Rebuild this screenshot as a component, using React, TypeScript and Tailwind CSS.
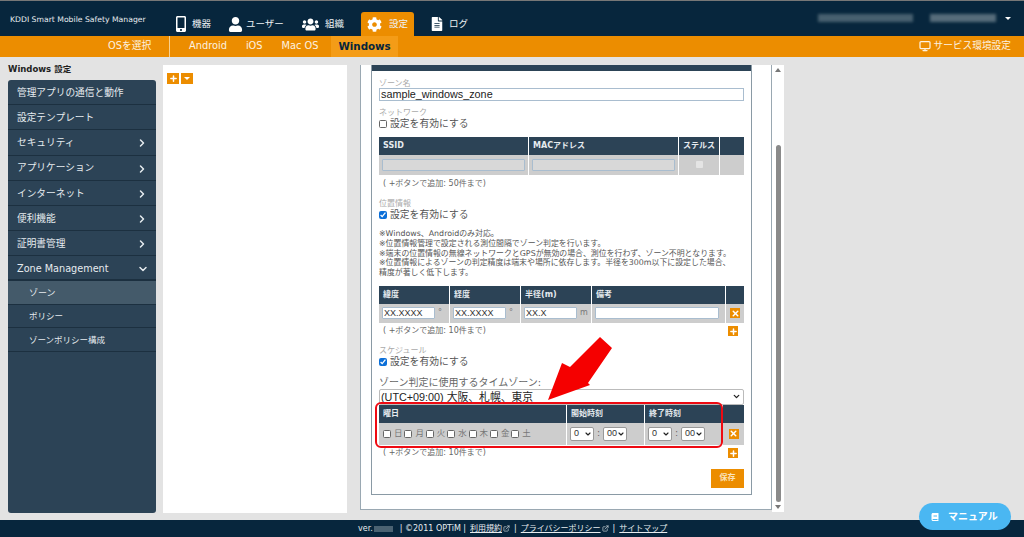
import { ChevronDown, ChevronRight, ExternalLink, Monitor, Plus, X } from "lucide-react";
import { FaBook, FaCog, FaFileAlt, FaMobileAlt, FaUser, FaUsers } from "react-icons/fa";

const sans = "font-['DejaVu_Sans','Noto_Sans_CJK_JP',sans-serif]";
const arial = "font-['Liberation_Sans','Noto_Sans_CJK_JP',sans-serif]";

const menu = [
    { label: "管理アプリの通信と動作" },
    { label: "設定テンプレート" },
    { label: "セキュリティ", more: true },
    { label: "アプリケーション", more: true },
    { label: "インターネット", more: true },
    { label: "便利機能", more: true },
    { label: "証明書管理", more: true },
];

function HeaderTab({ icon, label, active, className }: { icon: React.ReactNode; label: string; active?: boolean; className: string }) {
    return (
        <div className={`flex h-[24px] items-center rounded-t-[3px] ${active ? "bg-[#ec8d00]" : ""} ${className}`}>
            {icon}
            <span className="text-[9.5px] text-[#eef2f5]">{label}</span>
        </div>
    );
}

function OrangeIcon({ kind }: { kind: "plus" | "x" }) {
    return (
        <div className="flex h-[10px] w-[10px] items-center justify-center bg-[#ec8d00]">
            {kind === "plus" ? <Plus size={9} strokeWidth={4} color="white" /> : <X size={9} strokeWidth={4} color="white" />}
        </div>
    );
}

function Check({ checked }: { checked?: boolean }) {
    return (
        <input
            type="checkbox"
            defaultChecked={checked}
            className={`m-0 h-[8px] w-[8px] shrink-0 accent-[#0b6fd8] ${checked ? "" : "appearance-none rounded-[1.5px] border border-[#666] bg-white"}`}
        />
    );
}

function Enable({ checked }: { checked?: boolean }) {
    return (
        <div className="flex h-[12px] items-center gap-[3px] text-[9.8px] leading-[12px] text-[#555]">
            <Check checked={checked} />
            <span>設定を有効にする</span>
        </div>
    );
}

function Label({ children }: { children: React.ReactNode }) {
    return <div className="h-[10px] text-[8px] leading-[10px] text-[#aaa]">{children}</div>;
}

function Note({ children, plus }: { children: React.ReactNode; plus?: boolean }) {
    return (
        <div className="mt-[3px] flex h-[11px] items-center justify-between pl-[4px] pr-[6px] text-[8px] text-[#666]">
            <span>{children}</span>
            {plus && <OrangeIcon kind="plus" />}
        </div>
    );
}

function Head({ children }: { children?: React.ReactNode }) {
    return <div className="flex items-center bg-[#2c4356] pl-[4px] text-[8px] font-bold text-[#e6ebef]">{children}</div>;
}

function Cell({ children, className = "" }: { children?: React.ReactNode; className?: string }) {
    return <div className={`flex items-center bg-[#cdcdcd] ${className}`}>{children}</div>;
}

function TimeSelect({ value }: { value: string }) {
    return (
        <div className={`flex h-[14px] w-[24px] items-center justify-between rounded-[2px] border border-[#999] bg-white pl-[3px] pr-[1px] text-[9px] text-[#333] ${arial}`}>
            <span>{value}</span>
            <ChevronDown size={8} strokeWidth={3.5} color="#222" />
        </div>
    );
}

function TimeCell() {
    return (
        <Cell className="pl-[3px] text-[8px] text-[#555]">
            <TimeSelect value="0" />
            <span className="w-[9px] text-center">:</span>
            <TimeSelect value="00" />
        </Cell>
    );
}

function CoordInput({ value, width }: { value: string; width: string }) {
    return (
        <input
            readOnly
            value={value}
            className={`h-[12px] rounded-[1px] border border-[#a9bdcf] bg-white px-[1px] text-[9px] text-[#333] ${width} ${arial}`}
        />
    );
}

export default function App() {
    return (
        <div className={`relative flex h-[537px] w-[1024px] flex-col overflow-hidden bg-[#e3e3e3] ${sans}`}>
            {/* header */}
            <header className="flex h-[36px] shrink-0 items-end border-t border-[#777] bg-[#07263d]">
                <div className="w-[176px] self-stretch pl-[10px] pt-[14px] text-[7.7px] leading-[10px] text-[#e8edf0]">
                    KDDI Smart Mobile Safety Manager
                </div>
                <HeaderTab className="w-[52px]" icon={<FaMobileAlt size={16} color="white" className="-ml-[3px] mr-[3px]" />} label="機器" />
                <HeaderTab className="w-[74px]" icon={<FaUser size={15} color="white" className="mr-[3px]" />} label="ユーザー" />
                <HeaderTab className="w-[59px]" icon={<FaUsers size={17} color="white" className="mr-[6px]" />} label="組織" />
                <HeaderTab active className="w-[53px] pl-[6px]" icon={<FaCog size={15} color="white" className="mr-[7px]" />} label="設定" />
                <HeaderTab className="ml-[16px] w-[60px]" icon={<FaFileAlt size={14} color="white" className="mr-[5px]" />} label="ログ" />
                <div className="ml-auto flex h-full items-center pb-[1px] pr-[13px]">
                    <div className="h-[8px] w-[95px] bg-[#47606f] blur-[1.5px]" />
                    <div className="ml-[17px] h-[8px] w-[66px] bg-[#566c7a] blur-[1.5px]" />
                    <div className="ml-[9px] h-0 w-0 border-x-[3px] border-t-[3px] border-x-transparent border-t-white" />
                </div>
            </header>

            {/* os tabs */}
            <nav className="flex h-[21px] shrink-0 items-center bg-[#ec8d00] text-[9.8px] text-[#fdf2e0]">
                <span className="ml-[108px] w-[61px]">OSを選択</span>
                <div className="h-full w-px bg-[#f9d08f]" />
                <span className="ml-[19px]">Android</span>
                <span className="ml-[19px]">iOS</span>
                <span className="ml-[19px]">Mac OS</span>
                <span className="ml-[13px] flex h-full items-center bg-[#f49c17] px-[7px] text-[10.3px] font-bold text-[#07263d]">Windows</span>
                <div className="ml-auto flex items-center gap-[3px] pr-[13px] text-[9.7px]">
                    <Monitor size={12} strokeWidth={2.5} />
                    <span>サービス環境設定</span>
                </div>
            </nav>

            {/* body */}
            <main className="flex min-h-0 flex-1">
                <aside className="ml-[8px] flex w-[148px] flex-col">
                    <div className="h-[23px] pt-[7px] text-[8.5px] font-bold leading-[10px] text-[#222]">Windows 設定</div>
                    <div className="flex h-[433px] flex-col rounded-[3px] bg-[#2c4356] text-[9.7px] text-[#e6ebef]">
                        {menu.map((m) => (
                            <div key={m.label} className="flex h-[25.2px] items-center justify-between border-b border-[#1c3040] pl-[9px] pr-[8px] pt-[2px]">
                                <span>{m.label}</span>
                                {m.more && <ChevronRight size={12} strokeWidth={3} />}
                            </div>
                        ))}
                        <div className="flex h-[25px] items-center justify-between border-b-2 border-[#1c3040] pl-[9px] pr-[7px] pt-[2px]">
                            <span>Zone Management</span>
                            <ChevronDown size={12} strokeWidth={3} />
                        </div>
                        <div className="flex h-[24px] items-center border-b border-[#1c3040] bg-[#445a6a] pl-[21px] pt-[2px] text-[9px]">ゾーン</div>
                        <div className="flex h-[23px] items-center border-b border-[#1c3040] pl-[21px] pt-px text-[8.5px]">ポリシー</div>
                        <div className="flex h-[24px] items-center border-b border-[#1c3040] pl-[21px] pt-[2px] text-[8.5px]">ゾーンポリシー構成</div>
                    </div>
                </aside>

                <section className="ml-[7px] mt-[8px] flex h-[448px] w-[184px] gap-[2px] bg-white pl-[4px] pt-[8px]">
                    <div className="flex h-[11px] w-[12px] items-center justify-center bg-[#ec8d00]">
                        <Plus size={9} strokeWidth={4} color="white" />
                    </div>
                    <div className="flex h-[11px] w-[12px] items-center justify-center bg-[#ec8d00]">
                        <div className="h-0 w-0 border-x-[3px] border-t-[3px] border-x-transparent border-t-white" />
                    </div>
                </section>

                <section className="ml-[13px] mt-[8px] h-[445px] w-[412px] border-b border-l border-r border-[#9aa8b2] bg-white pl-[10px]">
                    <div className="h-[430px] w-[381px] border-x border-b border-[#8a9aa5] pb-[8px]">
                        <div className="h-[6px] bg-[#2c4356]" />
                        <div className="px-[7px]">
                            <div className="mt-[8px] h-[9px]"><Label>ゾーン名</Label></div>
                            <input
                                readOnly
                                value="sample_windows_zone"
                                className={`block h-[13px] w-[365px] border border-[#a9bdcf] px-[1px] text-[10.8px] text-[#222] ${arial}`}
                            />
                            <div className="mt-[7px]"><Label>ネットワーク</Label></div>
                            <Enable />

                            <div className="mt-[7px] grid h-[38px] w-[365px] grid-cols-[149px_149px_40px_1fr] grid-rows-[18px_20px] gap-x-px">
                                <Head>SSID</Head>
                                <Head>MACアドレス</Head>
                                <Head>ステルス</Head>
                                <Head />
                                <Cell className="px-[3px]"><div className="h-[12px] w-full rounded-[1px] border border-[#a9bdcf] bg-[#d8d8d8]" /></Cell>
                                <Cell className="px-[3px]"><div className="h-[12px] w-full rounded-[1px] border border-[#a9bdcf] bg-[#d8d8d8]" /></Cell>
                                <Cell className="justify-center"><div className="mb-[2px] h-[7px] w-[7px] rounded-[1px] bg-[#e4e4e4]" /></Cell>
                                <Cell />
                            </div>
                            <Note>( +ボタンで追加: 50件まで)</Note>

                            <div className="mt-[10px]"><Label>位置情報</Label></div>
                            <Enable checked />

                            <div className="mt-[8px] whitespace-nowrap text-[7.9px] leading-[9.75px] text-[#555]">
                                <p>※Windows、Androidのみ対応。</p>
                                <p>※位置情報管理で設定される測位間隔でゾーン判定を行います。</p>
                                <p>※端末の位置情報の無線ネットワークとGPSが無効の場合、測位を行わず、ゾーン不明となります。</p>
                                <p>※位置情報によるゾーンの判定精度は端末や場所に依存します。半径を300m以下に設定した場合、</p>
                                <p>精度が著しく低下します。</p>
                            </div>

                            <div className="mt-[8px] grid h-[37px] w-[365px] grid-cols-[70px_70px_70px_133px_1fr] grid-rows-[18px_19px] gap-x-px">
                                <Head>緯度</Head>
                                <Head>経度</Head>
                                <Head>半径(m)</Head>
                                <Head>備考</Head>
                                <Head />
                                <Cell className="pl-[3px] text-[8px] text-[#777]"><CoordInput value="XX.XXXX" width="w-[53px]" /><span className="ml-[3px]">°</span></Cell>
                                <Cell className="pl-[3px] text-[8px] text-[#777]"><CoordInput value="XX.XXXX" width="w-[53px]" /><span className="ml-[3px]">°</span></Cell>
                                <Cell className="pl-[3px] text-[8px] text-[#777]"><CoordInput value="XX.X" width="w-[53px]" /><span className="ml-[3px]">m</span></Cell>
                                <Cell className="pl-[3px]"><CoordInput value="" width="w-[124px]" /></Cell>
                                <Cell className="justify-center"><OrangeIcon kind="x" /></Cell>
                            </div>
                            <Note plus>( +ボタンで追加: 10件まで)</Note>

                            <div className="mt-[9px]"><Label>スケジュール</Label></div>
                            <Enable checked />

                            <div className="mt-[8px] h-[13px] text-[10px] leading-[13px] text-[#666]">ゾーン判定に使用するタイムゾーン:</div>
                            <div className={`flex h-[16px] w-[365px] items-center justify-between rounded-[2px] border border-[#bbb] bg-white pl-[1px] pr-[2px] text-[10.8px] text-[#222] ${arial}`}>
                                <span>(UTC+09:00) 大阪、札幌、東京</span>
                                <ChevronDown size={9} strokeWidth={3.5} color="#222" />
                            </div>

                            <div className="grid h-[40px] w-[365px] grid-cols-[187px_77px_77px_1fr] grid-rows-[18px_22px] gap-x-px">
                                <Head>曜日</Head>
                                <Head>開始時刻</Head>
                                <Head>終了時刻</Head>
                                <Head />
                                <Cell className="pl-[4px] text-[8.5px] text-[#777]">
                                    {["日", "月", "火", "水", "木", "金", "土"].map((d) => (
                                        <label key={d} className="flex w-[21.4px] shrink-0 items-center gap-[3px]">
                                            <Check />
                                            <span>{d}</span>
                                        </label>
                                    ))}
                                </Cell>
                                <TimeCell />
                                <TimeCell />
                                <Cell className="justify-center"><OrangeIcon kind="x" /></Cell>
                            </div>
                            <Note plus>( +ボタンで追加: 10件まで)</Note>

                            <div className="mt-[10px] flex justify-end">
                                <div className="flex h-[19px] w-[33px] items-center justify-center bg-[#ec8d00] text-[8px] font-bold text-[#fbe3bd]">保存</div>
                            </div>
                        </div>
                    </div>
                </section>

                {/* scrollbar */}
                <div className="mt-[8px] flex h-[447px] w-[12px] flex-col items-center bg-white">
                    <div className="mt-[3px] h-0 w-0 border-x-[3px] border-b-[4px] border-x-transparent border-b-[#777]" />
                    <div className="mt-[73px] h-[357px] w-[5px] rounded-full bg-[#8a8a8a]" />
                    <div className="mt-[3px] h-0 w-0 border-x-[3px] border-t-[4px] border-x-transparent border-t-[#777]" />
                </div>
            </main>

            {/* footer */}
            <footer className="flex h-[17px] shrink-0 items-center bg-[#07263d] pl-[358px] text-[8px] text-[#e8edf0]">
                <span>ver.</span>
                <span className="ml-px h-[6px] w-[19px] bg-[#4a6272]" />
                <span className="ml-[7px]">| ©2011 OPTiM |</span>
                <span className="ml-[4px] underline">利用規約</span>
                <ExternalLink size={7} className="ml-[1px]" />
                <span className="ml-[4px]">|</span>
                <span className="ml-[4px] underline">プライバシーポリシー</span>
                <ExternalLink size={7} className="ml-[1px]" />
                <span className="ml-[4px]">|</span>
                <span className="ml-[4px] underline">サイトマップ</span>
            </footer>

            {/* manual button floats over the page */}
            <div className="absolute left-[919px] top-[503px] flex h-[27px] w-[92px] items-center gap-[9px] rounded-full bg-[#4ab7f2] pl-[12px] text-[10px] font-bold text-white">
                <FaBook size={8} />
                <span>マニュアル</span>
            </div>

            {/* annotation */}
            <div className="absolute left-[375px] top-[402px] h-[46px] w-[348px] rounded-[6px] border-2 border-[#ee0a12]" />
            <svg className="absolute left-[540px] top-[330px]" width="80" height="75" viewBox="0 0 80 75">
                <polygon points="60,7 72,18 48,53 50,55 8,70 22,33 30,37" fill="#f50000" />
            </svg>
        </div>
    );
}
